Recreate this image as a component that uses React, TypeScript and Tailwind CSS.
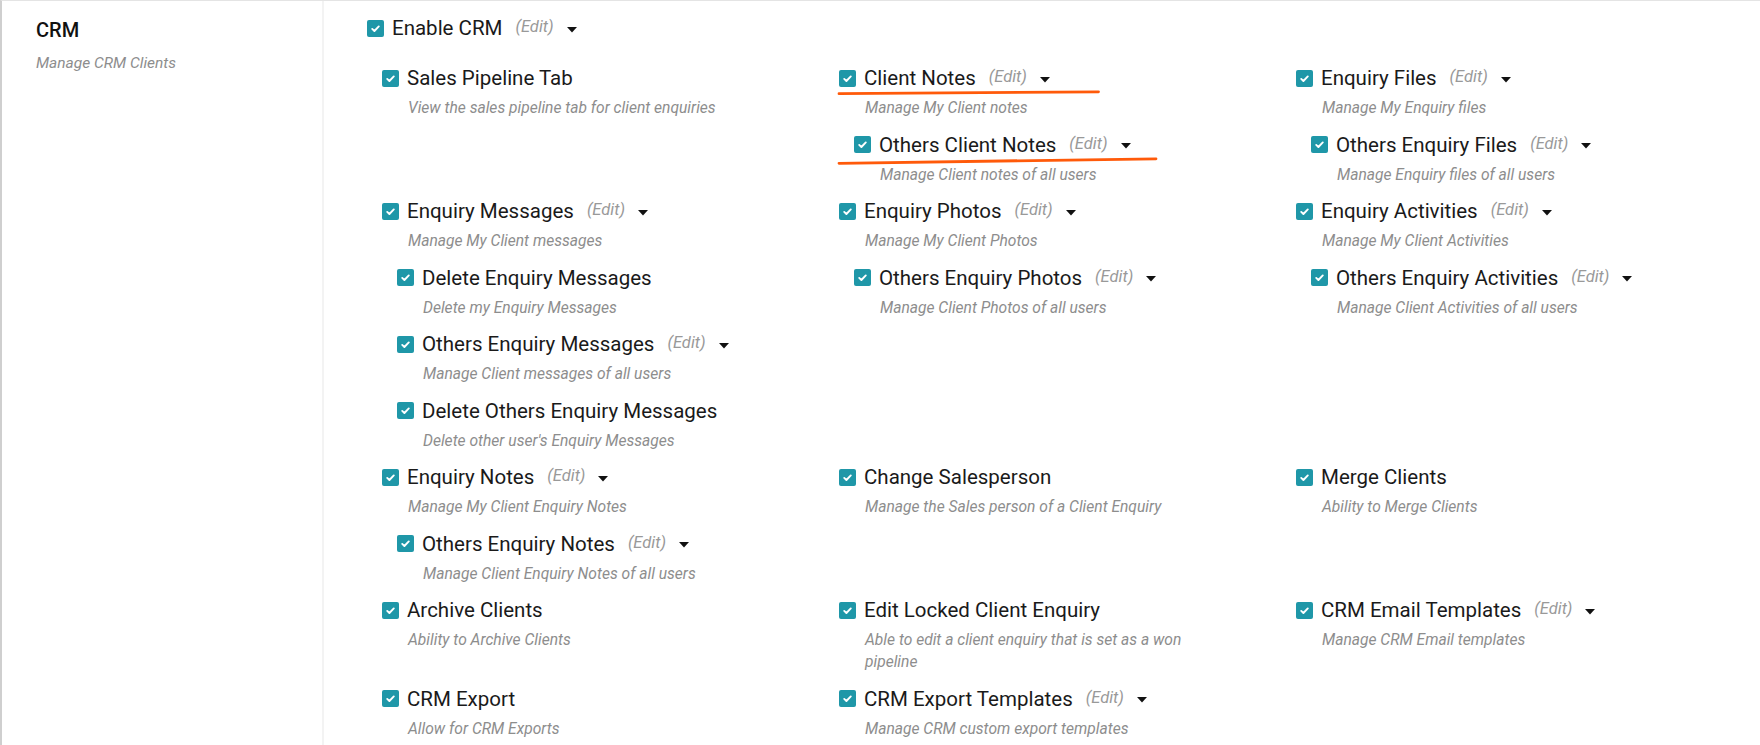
import React from 'react';

type Perm = {
  label: string;
  desc: string;
  edit?: boolean;
  children?: Perm[];
};

// grid cells, left to right, top to bottom
const groups: (Perm | null)[] = [
  { label: 'Sales Pipeline Tab', desc: 'View the sales pipeline tab for client enquiries' },
  {
    label: 'Client Notes',
    edit: true,
    desc: 'Manage My Client notes',
    children: [{ label: 'Others Client Notes', edit: true, desc: 'Manage Client notes of all users' }],
  },
  {
    label: 'Enquiry Files',
    edit: true,
    desc: 'Manage My Enquiry files',
    children: [{ label: 'Others Enquiry Files', edit: true, desc: 'Manage Enquiry files of all users' }],
  },
  {
    label: 'Enquiry Messages',
    edit: true,
    desc: 'Manage My Client messages',
    children: [
      { label: 'Delete Enquiry Messages', desc: 'Delete my Enquiry Messages' },
      { label: 'Others Enquiry Messages', edit: true, desc: 'Manage Client messages of all users' },
      { label: 'Delete Others Enquiry Messages', desc: "Delete other user's Enquiry Messages" },
    ],
  },
  {
    label: 'Enquiry Photos',
    edit: true,
    desc: 'Manage My Client Photos',
    children: [{ label: 'Others Enquiry Photos', edit: true, desc: 'Manage Client Photos of all users' }],
  },
  {
    label: 'Enquiry Activities',
    edit: true,
    desc: 'Manage My Client Activities',
    children: [{ label: 'Others Enquiry Activities', edit: true, desc: 'Manage Client Activities of all users' }],
  },
  {
    label: 'Enquiry Notes',
    edit: true,
    desc: 'Manage My Client Enquiry Notes',
    children: [{ label: 'Others Enquiry Notes', edit: true, desc: 'Manage Client Enquiry Notes of all users' }],
  },
  { label: 'Change Salesperson', desc: 'Manage the Sales person of a Client Enquiry' },
  { label: 'Merge Clients', desc: 'Ability to Merge Clients' },
  { label: 'Archive Clients', desc: 'Ability to Archive Clients' },
  { label: 'Edit Locked Client Enquiry', desc: 'Able to edit a client enquiry that is set as a won pipeline' },
  { label: 'CRM Email Templates', edit: true, desc: 'Manage CRM Email templates' },
  { label: 'CRM Export', desc: 'Allow for CRM Exports' },
  { label: 'CRM Export Templates', edit: true, desc: 'Manage CRM custom export templates' },
  null,
];

function Check() {
  return (
    <span className="w-[17px] h-[17px] shrink-0 rounded-[2px] bg-[#1f97a8] flex items-center justify-center">
      <svg width="17" height="17" viewBox="0 0 17 17">
        <path d="M5.2 8.9 L7.4 11 L11.8 6.4" fill="none" stroke="white" strokeWidth="1.9" strokeLinecap="round" strokeLinejoin="round" />
      </svg>
    </span>
  );
}

function Caret() {
  return (
    <svg width="10" height="6" viewBox="0 0 10 6" className="ml-[5px] mt-[3px]">
      <path d="M0 0 L10 0 L5 5.5 Z" fill="#111" />
    </svg>
  );
}

function Label({ text, edit }: { text: string; edit?: boolean }) {
  return (
    <div className="h-[28px] flex items-center gap-2">
      <Check />
      <span className="text-[20.5px] text-[#1a1a1a] leading-[28px]">{text}</span>
      {edit && (
        <>
          <span className="ml-[5px] text-[16.5px] italic text-[#999] leading-[28px] -mt-[2px]">(Edit)</span>
          <Caret />
        </>
      )}
    </div>
  );
}

function Item({ perm }: { perm: Perm }) {
  return (
    <div className="pb-[11.5px]">
      <Label text={perm.label} edit={perm.edit} />
      <p className="mt-[5px] pl-[26px] max-w-[360px] text-[15.6px] italic leading-[22px] text-[#8d8d8d]">{perm.desc}</p>
    </div>
  );
}

function Group({ perm }: { perm: Perm }) {
  return (
    <div>
      <Item perm={perm} />
      {perm.children?.map((c) => (
        <div key={c.label} className="ml-[15px]">
          <Item perm={c} />
        </div>
      ))}
    </div>
  );
}

export default function App() {
  return (
    <div className="relative h-[745px] w-[1760px] overflow-hidden bg-white border-t border-[#e4e4e4] border-l-2 border-l-[#cfcfcf] font-['Roboto',sans-serif] flex">
      {/* section title */}
      <aside className="w-[322px] shrink-0 border-r-2 border-[#f3f3f3] pl-[34px] pt-[17px]">
        <h2 className="text-[20px] font-medium leading-[24px] text-[#111]">CRM</h2>
        <p className="mt-[11px] text-[15.5px] italic leading-[20px] text-[#8d8d8d]">Manage CRM Clients</p>
      </aside>

      {/* permissions */}
      <main className="flex-1 pl-[43px] pt-[13px]">
        <Label text="Enable CRM" edit />
        <div className="mt-[22px] ml-[15px] grid grid-cols-[457px_457px_457px] items-start">
          {groups.map((g, i) => (g ? <Group key={g.label} perm={g} /> : <div key={i} />))}
        </div>
      </main>

      {/* highlight marks drawn on the screenshot */}
      <svg className="absolute left-0 top-0 pointer-events-none" width="1760" height="745">
        <path d="M837 92.7 Q960 91.5 1096.5 90.8" fill="none" stroke="#ff5a0a" strokeWidth="2.8" strokeLinecap="round" />
        <path d="M837 162.3 Q1000 160 1154 157.8" fill="none" stroke="#ff5a0a" strokeWidth="2.8" strokeLinecap="round" />
      </svg>
    </div>
  );
}
